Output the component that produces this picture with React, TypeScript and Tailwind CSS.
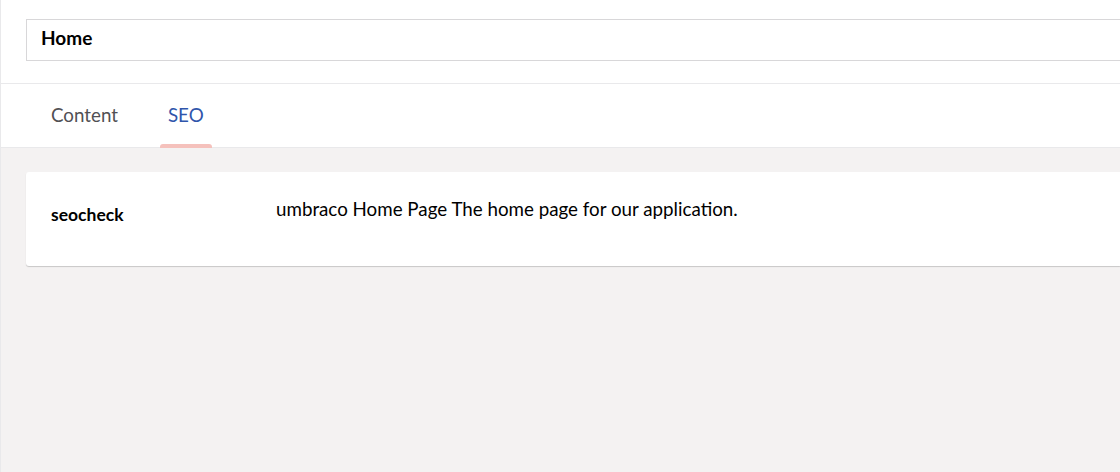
import React from 'react';

const tabs = [
  { label: 'Content', active: false },
  { label: 'SEO', active: true },
];

const App: React.FC = () => {
  return (
    <div
      className="w-[1120px] h-[472px] overflow-hidden border-l border-[#e9e9eb] bg-[#f4f2f2] flex flex-col"
      style={{ fontFamily: 'Lato, "Open Sans", sans-serif' }}
    >
      <div className="bg-white h-[84px] border-b border-[#e9e9eb] pt-[19px] pl-[25px] shrink-0">
        <div className="h-[42px] border border-[#d8d7d9] border-r-0 flex items-center pl-[14px] text-[19px] font-bold text-[#000]">
          <span className="-mt-[3px]">Home</span>
        </div>
      </div>

      <div className="bg-white h-[64px] border-b border-[#e9e9eb] flex items-stretch pl-[42px] shrink-0">
        {tabs.map((tab) => (
          <div
            key={tab.label}
            className={`relative flex items-center px-2 mr-[34px] text-[18.75px] ${
              tab.active ? 'text-[#2f55ab]' : 'text-[#515054]'
            }`}
          >
            <span>{tab.label}</span>
            {tab.active && (
              <span className="absolute left-0 right-0 -bottom-px h-[4px] rounded-t-[3px] bg-[#f5c1bc]" />
            )}
          </div>
        ))}
      </div>

      <div className="pt-[24px] pl-[25px]">
        <div className="bg-white rounded-l-[3px] shadow-[0_1px_1px_rgba(0,0,0,0.18)] h-[94px] flex px-[25px]">
          <div className="w-[225px] pt-[30px] text-[17.5px] font-bold text-[#000]">seocheck</div>
          <div className="pt-[23px] text-[18.75px] text-[#000]">
            umbraco Home Page The home page for our application.
          </div>
        </div>
      </div>
    </div>
  );
};

export default App;
